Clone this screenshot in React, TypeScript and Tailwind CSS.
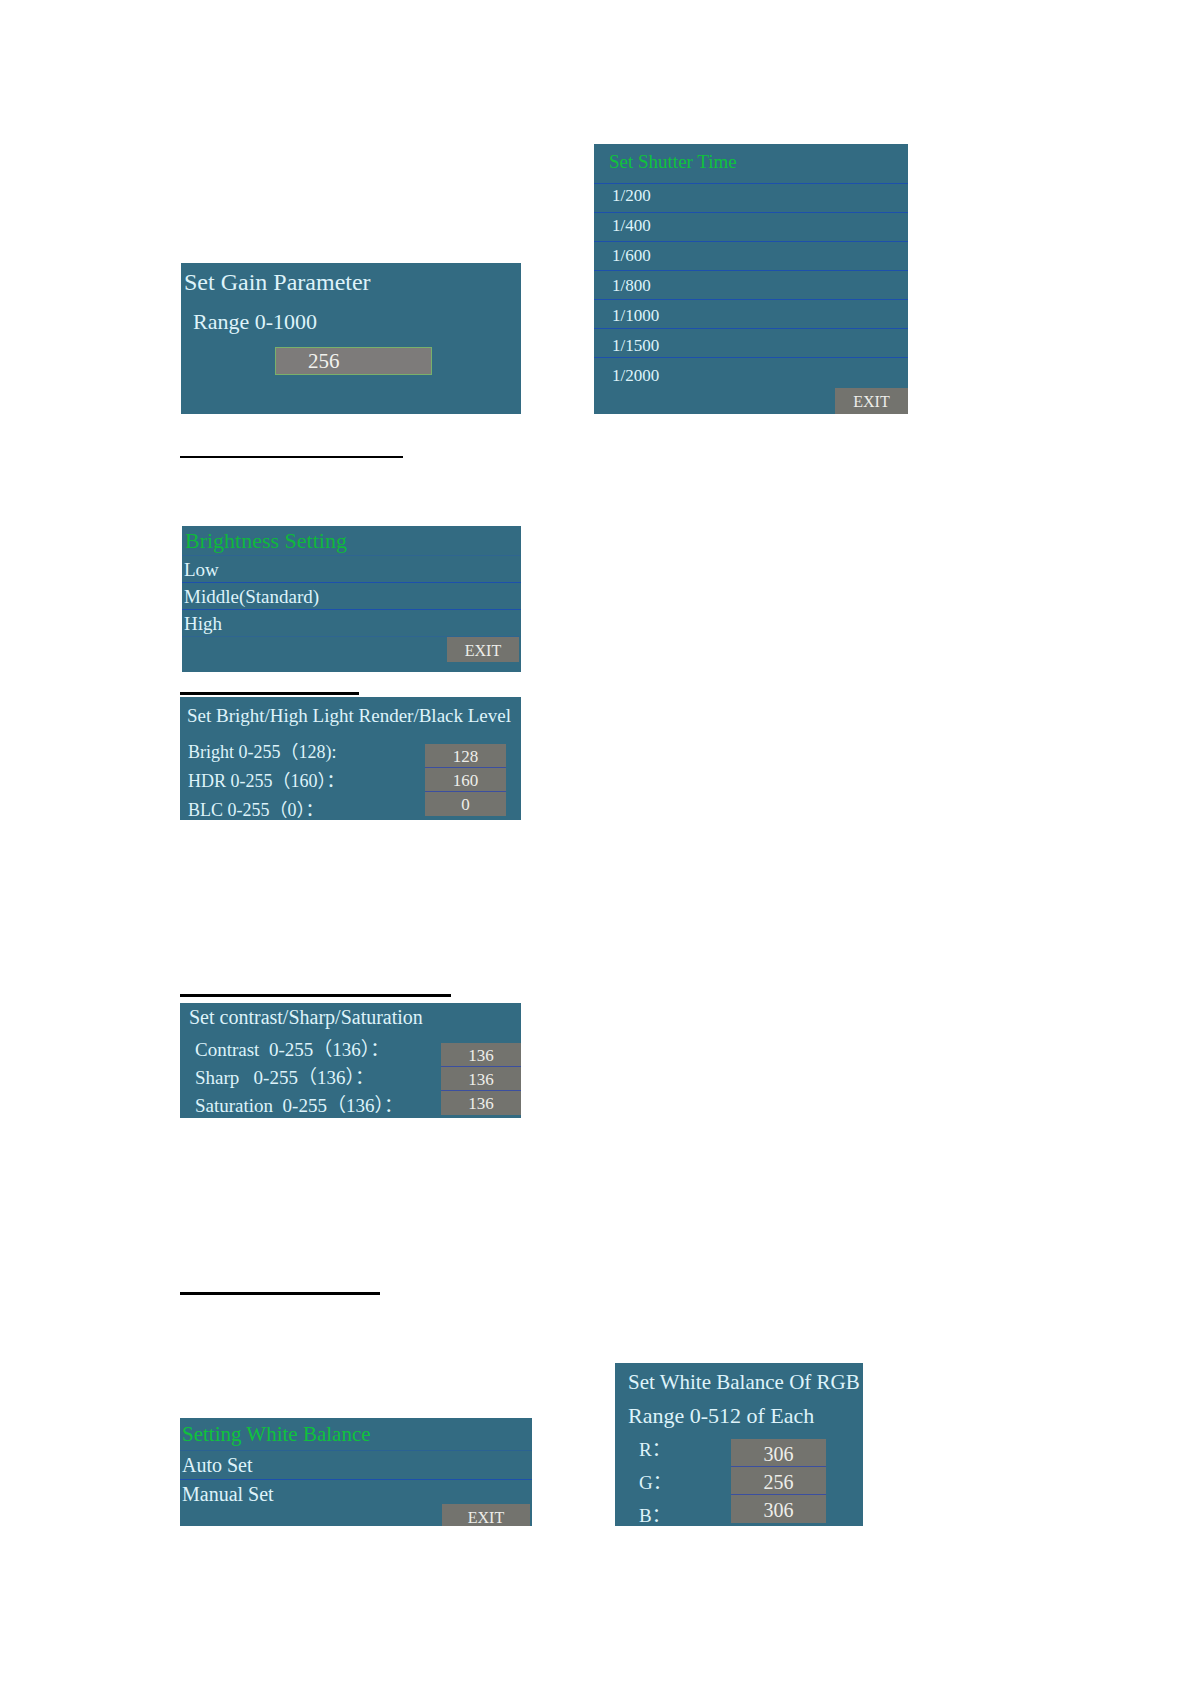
import { useId, type ReactNode } from "react";

function Panel({ className, children }: { className: string; children: ReactNode }) {
  return (
    <section className={`flex flex-col overflow-hidden bg-[#336b82] text-[#def3fa] ${className}`}>
      {children}
    </section>
  );
}

function ExitButton({ className }: { className: string }) {
  return (
    <button type="button" className={`self-end bg-[#73736e] pt-0.5 text-base text-[#eeeeea] ${className}`}>
      EXIT
    </button>
  );
}

type Field = { label: string; value: string };

/* Labels on the left, a stack of numeric boxes on the right. */
function FieldPanelBody({
  fields,
  labelsClass,
  boxesClass,
  inputClass,
}: {
  fields: Field[];
  labelsClass: string;
  boxesClass: string;
  inputClass: string;
}) {
  const id = useId();
  return (
    <div className="flex items-start justify-between">
      <div className={`flex flex-col whitespace-pre ${labelsClass}`}>
        {fields.map((f, i) => (
          <label key={f.label} htmlFor={`${id}-${i}`}>
            {f.label}
          </label>
        ))}
      </div>
      <div className={`flex flex-col divide-y divide-[#3b4fa0] ${boxesClass}`}>
        {fields.map((f, i) => (
          <input
            key={f.label}
            id={`${id}-${i}`}
            defaultValue={f.value}
            className={`w-full bg-[#73736e] pt-0.5 text-center text-[#eeeeea] ${inputClass}`}
          />
        ))}
      </div>
    </div>
  );
}

const shutterTimes = ["1/200", "1/400", "1/600", "1/800", "1/1000", "1/1500", "1/2000"];

export default function App() {
  return (
    <main
      className="min-h-screen bg-white pt-36 pb-[158px] pl-[180px]"
      style={{ fontFamily: '"Liberation Serif", "Noto Sans CJK SC", serif' }}
    >
      <div className="flex items-end gap-[73px]">
        <Panel className="ml-px w-[340px] pb-[39px]">
          <h2 className="pl-[3px] text-2xl leading-[38px]">Set Gain Parameter</h2>
          <label htmlFor="gain" className="pl-3 text-[22px] leading-[42px]">
            Range 0-1000
          </label>
          <input
            id="gain"
            defaultValue="256"
            className="mt-1 ml-[94px] h-7 w-[157px] border border-[#79b06a] bg-[#7d7b7a] pt-0.5 pl-8 text-[21px] text-[#f2f2ee]"
          />
        </Panel>

        <Panel className="w-[314px]">
          <h2 className="pl-[15px] text-[19px] leading-9 text-[#0fc23c]">Set Shutter Time</h2>
          <ul className="bg-[linear-gradient(#1d50ac_1px,transparent_1px)] bg-[length:100%_29px] bg-[position:0_3px]">
            {shutterTimes.map((t) => (
              <li key={t} className="last:bg-[#336b82]">
                <button type="button" className="block h-[30px] w-full pt-0.5 pl-[18px] text-left text-[17px]">
                  {t}
                </button>
              </li>
            ))}
          </ul>
          <ExitButton className="-mt-0.5 h-[26px] w-[73px]" />
        </Panel>
      </div>

      <hr className="mt-[42px] w-[223px] border-t-2 border-black" />

      <Panel className="mt-[68px] ml-0.5 w-[339px] pb-2.5">
        <h2 className="pl-[3px] text-[22px] leading-[29px] text-[#0fb83c]">Brightness Setting</h2>
        <ul className="divide-y divide-[#1d50ac] border-y border-y-[#2f6590]">
          {["Low", "Middle(Standard)", "High"].map((t) => (
            <li key={t}>
              <button type="button" className="block h-[26px] w-full pl-0.5 text-left text-[19px]">
                {t}
              </button>
            </li>
          ))}
        </ul>
        <ExitButton className="mr-0.5 h-[25px] w-[72px]" />
      </Panel>

      <hr className="mt-5 w-[179px] border-t-3 border-black" />

      <Panel className="mt-0.5 w-[341px]">
        <h2 className="pl-[7px] text-[19px] leading-[38px] whitespace-nowrap">
          Set Bright/High Light Render/Black Level
        </h2>
        <FieldPanelBody
          fields={[
            { label: "Bright 0-255（128):", value: "128" },
            { label: "HDR 0-255（160）：", value: "160" },
            { label: "BLC 0-255（0）：", value: "0" },
          ]}
          labelsClass="gap-[9px] pt-[7px] pl-2 text-[18px] leading-5"
          boxesClass="mt-[9px] mr-[15px] w-[81px]"
          inputClass="h-6 text-[17px]"
        />
      </Panel>

      <hr className="mt-[174px] w-[271px] border-t-3 border-black" />

      <Panel className="mt-1.5 w-[341px] pb-0.5">
        <h2 className="pl-[9px] text-xl leading-7">Set contrast/Sharp/Saturation</h2>
        <FieldPanelBody
          fields={[
            { label: "Contrast  0-255（136）：", value: "136" },
            { label: "Sharp   0-255（136）：", value: "136" },
            { label: "Saturation  0-255（136）：", value: "136" },
          ]}
          labelsClass="gap-2 pt-[9px] pl-[15px] text-[19px] leading-5"
          boxesClass="mt-3 w-20"
          inputClass="h-6 text-[17px]"
        />
      </Panel>

      <hr className="mt-[174px] w-[200px] border-t-3 border-black" />

      <div className="mt-[68px] flex items-end gap-[83px]">
        <Panel className="w-[352px]">
          <h2 className="pl-0.5 text-[21px] leading-8 text-[#0fc23c]">Setting White Balance</h2>
          <ul className="divide-y divide-[#1d50ac] border-t border-t-[#2b6292]">
            {["Auto Set", "Manual Set"].map((t) => (
              <li key={t}>
                <button type="button" className="block h-7 w-full pl-0.5 text-left text-xl">
                  {t}
                </button>
              </li>
            ))}
          </ul>
          <ExitButton className="-mt-1 mr-0.5 h-[22px] w-[88px]" />
        </Panel>

        <Panel className="w-[248px]">
          <h2 className="pl-[13px] text-[21px] leading-[38px] whitespace-nowrap">
            Set White Balance Of RGB
          </h2>
          <p className="pl-[13px] text-[22px] leading-[30px]">Range 0-512 of Each</p>
          <FieldPanelBody
            fields={[
              { label: "R：", value: "306" },
              { label: "G：", value: "256" },
              { label: "B：", value: "306" },
            ]}
            labelsClass="gap-[13px] pt-[9px] pl-6 text-[19px] leading-5"
            boxesClass="mt-2 mr-[37px] w-[95px]"
            inputClass="h-7 text-xl"
          />
        </Panel>
      </div>
    </main>
  );
}
